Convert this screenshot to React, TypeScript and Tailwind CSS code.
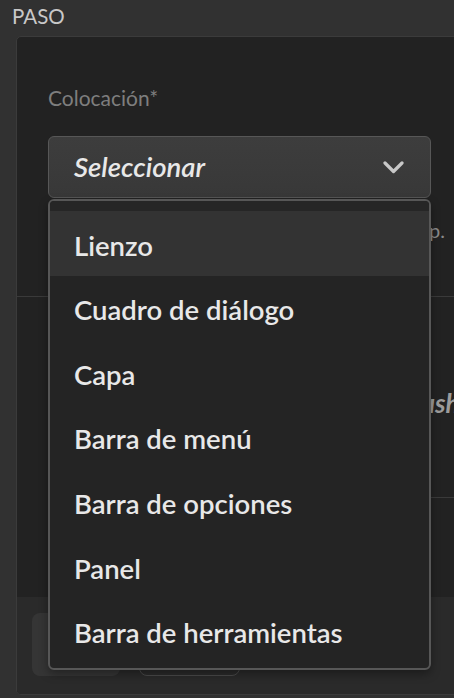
const options = [
  "Lienzo",
  "Cuadro de diálogo",
  "Capa",
  "Barra de menú",
  "Barra de opciones",
  "Panel",
  "Barra de herramientas",
];

export default function App() {
  return (
    <div className="relative h-[698px] w-[454px] overflow-hidden bg-[#313131] font-['Lato','Liberation_Sans',sans-serif]">
      <div className="h-[36px] pl-[12px] pt-[2px] text-[20.5px] leading-[28px] text-[#c8c8c8]">PASO</div>

      <div className="ml-[16px] flex h-[659px] w-[470px] flex-col overflow-hidden rounded-[5px] border border-[#3b3b3b] bg-[#222222]">
        {/* placement field */}
        <div className="h-[260px] border-b border-[#3a3a3a] pl-[31px] pt-[49px]">
          <div className="text-[21px] leading-[24px] text-[#7e7e7e]">Colocación*</div>
          <div className="mt-[26px] flex h-[62px] w-[383px] items-center justify-between rounded-[6px] border border-[#575757] bg-[linear-gradient(180deg,#3d3d3d,#383838)] pl-[25px] pr-[26px]">
            <span className="text-[27.5px] font-semibold italic text-[#e8e8e8]">Seleccionar</span>
            <svg width="21" height="13" viewBox="0 0 21 13" fill="none">
              <path d="M2 2 L10.5 10.5 L19 2" stroke="#c8c8c8" strokeWidth="3.2" strokeLinecap="round" strokeLinejoin="round" />
            </svg>
          </div>
          <div className="mt-[20px] w-[397px] whitespace-nowrap text-right text-[20px] leading-[24px] text-[#8a8a8a]">
            Dónde aparece el elemento en Photoshop.
          </div>
        </div>

        {/* tool field */}
        <div className="h-[300px] pl-[31px] pt-[40px]">
          <div className="text-[21px] leading-[24px] text-[#7e7e7e]">Herramienta</div>
          <div className="mt-[26px] whitespace-nowrap pl-[348px] text-[26px] font-bold italic leading-[32px] text-[#9c9c9c]">
            Brush
          </div>
          <div className="mt-[78px] border-b border-[#3a3a3a]" />
        </div>

        {/* footer */}
        <div className="flex flex-1 items-start gap-[19px] bg-[#2a2a2a] pl-[15px] pt-[16px]">
          <div className="h-[63px] w-[88px] rounded-[8px] bg-[#353535]" />
          <div className="h-[63px] w-[101px] rounded-[8px] border border-[#4a4a4a]" />
        </div>
      </div>

      {/* open dropdown menu */}
      <div className="absolute left-[48px] top-[199px] h-[471px] w-[383px] overflow-hidden rounded-[6px] border-2 border-[#575757] bg-[#242424] shadow-[0_4px_10px_rgba(0,0,0,0.35)]">
        <div className="h-[10px] bg-[#262626]" />
        {options.map((label, i) => (
          <div
            key={label}
            className={`flex h-[64.6px] items-center whitespace-nowrap pl-[24px] pt-[4px] text-[27.5px] font-semibold text-[#e8e8e8] ${
              i === 0 ? "bg-[#333333]" : ""
            }`}
          >
            {label}
          </div>
        ))}
      </div>
    </div>
  );
}
